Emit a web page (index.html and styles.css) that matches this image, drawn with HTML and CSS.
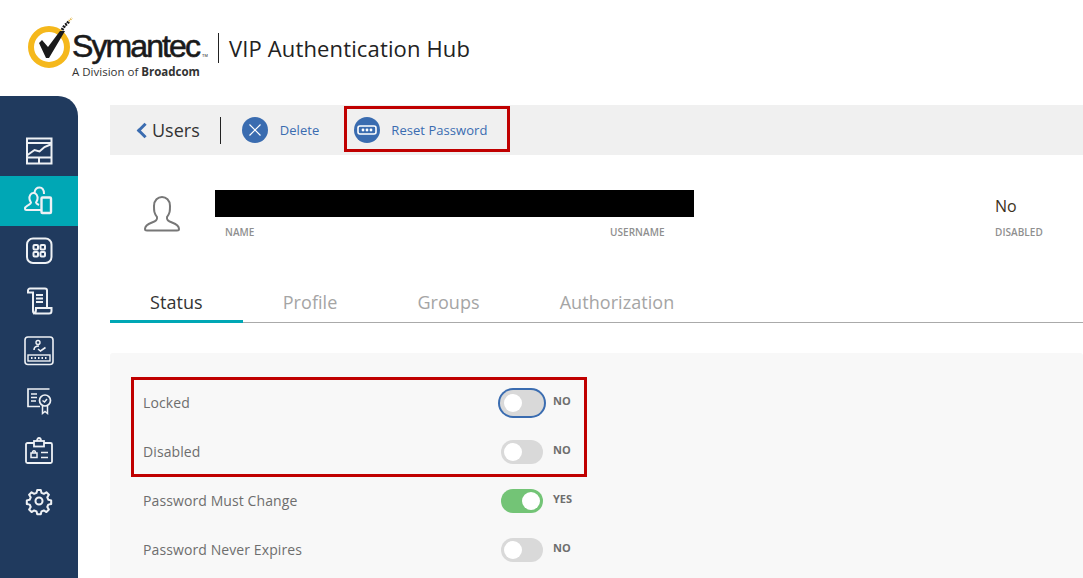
FILE: index.html
```html
<!DOCTYPE html>
<html lang="en">
<head>
    <meta charset="UTF-8">
    <meta name="viewport" content="width=device-width, initial-scale=1.0">
    <title>VIP Authentication Hub</title>
    <link rel="stylesheet" href="styles.css">
</head>
<body>
    <header class="header">
        <svg class="logo-mark" width="50" height="54" viewBox="0 0 50 54">
            <circle cx="21" cy="31" r="18" fill="none" stroke="#f5b81c" stroke-width="6"/>
            <path d="M11 27 L14 24 L20 31 L32 15 L37 15 L21 42 L18 42 Z" fill="#1a1a1a"/>
            <path d="M34 14 L37 9 L39 8 L41 5" fill="none" stroke="#1a1a1a" stroke-width="3" stroke-dasharray="2 1"/>
            <path d="M41 5 L44 2" fill="none" stroke="#d9a520" stroke-width="2" stroke-dasharray="1 1"/>
        </svg>
        <div class="logo-text">
            <div class="logo-name">Symantec<span class="logo-tm">TM</span></div>
            <div class="logo-sub">A Division of <b>Broadcom</b></div>
        </div>
        <div class="header-title">VIP Authentication Hub</div>
    </header>

    <div class="app">
        <nav class="sidebar">
            <a class="nav-item">
                <svg viewBox="0 0 30 30"><path d="M3 2.500h24.500v25H3z M3 7h24.500 M3 21.500h24.500 M15 21.500v6 M3.500 19l7-5 5 1.500 5-4.500 6-2.500"/></svg>
            </a>
            <a class="nav-item active">
                <svg viewBox="0 0 30 30"><path d="M10.500 6.500C11 3.500 13 1.500 15.500 1.500c3 0 4.500 2.500 4.500 6.500 M9.500 7a4 5 0 0 0-4 6c.2 1.500 1 2.500 1.500 3.500 0 1-1 1.500-2.500 2.500C3 20 1 21 1 22.500c0 1 .5 1.500 1.500 1.500H17 M9.500 7a4 5 0 0 1 4 6c-.2 1.500-1 2.500-1.500 3.500 0 1 1 1.500 3 2.500"/><rect x="17.500" y="11.500" width="9.500" height="15.500" rx="1" stroke-width="2.400"/></svg>
            </a>
            <a class="nav-item">
                <svg viewBox="0 0 30 30"><rect x="3" y="2.500" width="24.500" height="24.500" rx="6"/><rect x="9.500" y="9" width="4.500" height="4.500" rx="1"/><rect x="16.500" y="9" width="4.500" height="4.500" rx="1"/><rect x="9.500" y="16" width="4.500" height="4.500" rx="1"/><rect x="16.500" y="16" width="4.500" height="4.500" rx="1"/></svg>
            </a>
            <a class="nav-item">
                <svg viewBox="0 0 30 30"><path d="M6 2.500h15a2 2 0 0 1 2 2V22h4.500v3a2.500 2.500 0 0 1-2.500 2.500H11a2.500 2.500 0 0 1-2-2.500V6.500H4V4.500a2 2 0 0 1 2-2z M9 27.500c3 0 3-2.500 3-5.500h11.500 M12 9h7 M12 12.500h7 M12 16h7"/></svg>
            </a>
            <a class="nav-item">
                <svg viewBox="0 0 30 30"><rect x="1" y="1" width="28" height="27.500" rx="3" stroke-width="1.600"/><circle cx="14" cy="6.500" r="2" stroke-width="1.400"/><path d="M10 14c0-3 2-4 5-4 M14 13l2.500 2 5-3.500" stroke-width="1.600"/><rect x="4" y="19" width="22" height="6" stroke-width="1.400"/><path d="M7 22h16" stroke-width="2" stroke-dasharray="1.500 2"/></svg>
            </a>
            <a class="nav-item">
                <svg viewBox="0 0 30 30"><path d="M25.500 3H4v17.500h12 M7 8h6 M7 11.500h6 M7 15h5" stroke-width="1.700"/><circle cx="21" cy="14.500" r="5.500" stroke-width="1.700"/><path d="M18.500 14.500l2 1.500 2.500-3 M18.500 20v7.500l2.500-2 2.500 2V20" stroke-width="1.500"/></svg>
            </a>
            <a class="nav-item">
                <svg viewBox="0 0 30 30"><rect x="2" y="7" width="26" height="20" rx="1.500" stroke-width="1.800"/><rect x="10" y="5" width="10" height="5.500" fill="#203a5e" stroke-width="1.800"/><path d="M13 5c0-4 4-4 4 0" stroke-width="1.800"/><rect x="7" y="17" width="6" height="4.500" stroke-width="1.500"/><path d="M8.500 17c0-3 3-3 3 0 M17 16.500h7 M17 21.500h7" stroke-width="1.600"/></svg>
            </a>
            <a class="nav-item">
                <svg viewBox="-2 -2 34 34"><path d="M13 2.500h4l.8 3.300 2.700 1.100 2.900-1.800 2.800 2.800-1.800 2.900 1.100 2.700 3.300.8v4l-3.300.8-1.100 2.700 1.800 2.900-2.800 2.800-2.900-1.800-2.700 1.100-.8 3.300h-4l-.8-3.300-2.700-1.100-2.900 1.800-2.800-2.800 1.800-2.900-1.100-2.700-3.300-.8v-4l3.300-.8 1.100-2.700-1.800-2.900 2.800-2.800 2.900 1.800 2.700-1.100z" stroke-width="2.300" stroke-linejoin="round"/><circle cx="15" cy="15" r="4" stroke-width="2.300"/></svg>
            </a>
        </nav>

        <main class="main">
            <div class="toolbar">
                <a class="back-link"><span class="back-chevron"></span>Users</a>
                <span class="toolbar-divider"></span>
                <a class="tool-btn tool-delete">
                    <span class="tool-icon">
                        <svg width="14" height="14" viewBox="0 0 14 14"><path d="M1.500 1.500l11 11M12.500 1.500l-11 11" stroke="#fff" stroke-width="1.200"/></svg>
                    </span>
                    Delete
                </a>
                <a class="tool-btn tool-reset">
                    <span class="tool-icon">
                        <svg width="20" height="10" viewBox="0 0 20 10"><rect x="1" y="1" width="18" height="8" rx="2" fill="none" stroke="#fff" stroke-width="1.600"/><circle cx="6" cy="5" r="1.400" fill="#fff"/><circle cx="10" cy="5" r="1.400" fill="#fff"/><circle cx="14" cy="5" r="1.400" fill="#fff"/></svg>
                    </span>
                    Reset Password
                </a>
            </div>

            <section class="profile">
                <svg class="avatar" width="40" height="40" viewBox="0 0 40 40"><path d="M15 23c-3-4-3-6-3-11 0-6 4-9 8-9s8 3 8 9c0 5 0 7-3 11-.5 3 1 4 5 5.500 4 1.500 7 3 7 6.500 0 1.500-1 1.500-2 1.500H5c-1 0-2 0-2-1.500 0-3.500 3-5 7-6.500 4-1.500 5.500-2.500 5-5.500z" fill="none" stroke="#777" stroke-width="2"/></svg>
                <div class="profile-main">
                    <div class="redacted"></div>
                    <div class="profile-labels">
                        <span class="field-label">NAME</span>
                        <span class="field-label">USERNAME</span>
                    </div>
                </div>
                <div class="profile-disabled">
                    <div class="field-value">No</div>
                    <div class="field-label">DISABLED</div>
                </div>
            </section>

            <div class="tabs">
                <a class="tab active">Status</a>
                <a class="tab">Profile</a>
                <a class="tab">Groups</a>
                <a class="tab">Authorization</a>
            </div>

            <section class="status-panel">
                <div class="status-group">
                    <div class="status-row">
                        <span class="status-label">Locked</span>
                        <span class="toggle focused"><span class="knob"></span></span>
                        <span class="status-value">NO</span>
                    </div>
                    <div class="status-row">
                        <span class="status-label">Disabled</span>
                        <span class="toggle"><span class="knob"></span></span>
                        <span class="status-value">NO</span>
                    </div>
                </div>
                <div class="status-row">
                    <span class="status-label">Password Must Change</span>
                    <span class="toggle on"><span class="knob"></span></span>
                    <span class="status-value">YES</span>
                </div>
                <div class="status-row">
                    <span class="status-label">Password Never Expires</span>
                    <span class="toggle"><span class="knob"></span></span>
                    <span class="status-value">NO</span>
                </div>
            </section>
        </main>
    </div>
</body>
</html>
```

FILE: styles.css
```css
html, body {
    height: 100%;
}
body {
    margin: 0;
    overflow: hidden;
    background-color: #fff;
    font-family: 'Open Sans', 'Noto Sans', sans-serif;
    color: #333;
    display: flex;
    flex-direction: column;
}
.header {
    height: 96px;
    flex: none;
    display: flex;
    align-items: flex-start;
    padding-left: 28px;
}
.logo-mark {
    margin-top: 16px;
    margin-right: -6px;
    flex: none;
}
.logo-text {
    width: 141px;
    margin-top: 27px;
    font-family: 'Liberation Sans', Arial, sans-serif;
    color: #1a1a1a;
}
.logo-name {
    font-size: 32px;
    line-height: 38px;
    letter-spacing: -1.9px;
    -webkit-text-stroke: 0.6px #1a1a1a;
    white-space: nowrap;
}
.logo-tm {
    font-size: 4px;
    letter-spacing: 0;
    -webkit-text-stroke: 0;
    margin-left: 3px;
}
.logo-sub {
    margin-top: -10px;
    font-family: 'Open Sans', sans-serif;
    font-size: 11.5px;
    line-height: 14px;
    color: #333;
    white-space: nowrap;
}
.header-title {
    margin-top: 33px;
    margin-left: 5px;
    height: 30px;
    padding-left: 10px;
    border-left: 1px solid #222;
    font-size: 22px;
    line-height: 31px;
    letter-spacing: 0.14px;
    color: #222;
    white-space: nowrap;
}
.app {
    flex: 1;
    display: flex;
    min-height: 0;
}
.sidebar {
    width: 78px;
    flex: none;
    padding-top: 30px;
    box-sizing: border-box;
    background-color: #203a5e;
    border-top-right-radius: 20px;
}
.nav-item {
    height: 50px;
    display: flex;
    align-items: center;
    justify-content: center;
}
.nav-item.active {
    background-color: #00a7b5;
}
.nav-item svg {
    width: 30px;
    height: 30px;
    fill: none;
    stroke: #eef1f5;
    stroke-width: 2;
}
.main {
    flex: 1;
    min-width: 0;
    padding: 9px 0 0 32px;
}
.toolbar {
    height: 50px;
    display: flex;
    align-items: center;
    background-color: #f0f0f0;
}
.back-link {
    display: flex;
    align-items: center;
    margin-left: 27px;
    font-size: 18px;
    color: #333;
}
.back-chevron {
    box-sizing: border-box;
    width: 11px;
    height: 11px;
    margin: 0 2px 0 2px;
    border-left: 3px solid #3a6cb0;
    border-bottom: 3px solid #3a6cb0;
    transform: rotate(45deg);
}
.toolbar-divider {
    width: 1px;
    height: 27px;
    margin-left: 20px;
    background-color: #222;
}
.tool-btn {
    display: flex;
    align-items: center;
    font-size: 13px;
    letter-spacing: 0.05px;
    color: #3a6cb0;
}
.tool-delete {
    margin-left: 21px;
}
.tool-reset {
    box-sizing: border-box;
    width: 166px;
    height: 46px;
    margin-left: 25px;
    margin-top: -2px;
    padding-top: 2px;
    padding-left: 7px;
    border: 3px solid #c00000;
}
.tool-icon {
    width: 26px;
    height: 26px;
    margin-right: 12px;
    border-radius: 50%;
    background-color: #3a6cb0;
    display: flex;
    align-items: center;
    justify-content: center;
}
.tool-reset .tool-icon {
    margin-right: 11px;
}
.profile {
    height: 135px;
    display: flex;
    align-items: flex-start;
    box-sizing: border-box;
    padding: 35px 0 0 32px;
}
.avatar {
    margin-top: 4px;
    margin-right: 33px;
    flex: none;
}
.profile-main {
    width: 479px;
}
.redacted {
    height: 27px;
    background-color: #000;
}
.profile-labels {
    display: flex;
    padding-left: 10px;
    margin-top: 9px;
}
.profile-labels .field-label:first-child {
    width: 385px;
}
.field-label {
    font-size: 10px;
    line-height: 12px;
    letter-spacing: 0.05px;
    font-weight: 600;
    color: #8f8f8f;
}
.profile-disabled {
    margin-left: 301px;
}
.field-value {
    font-size: 16px;
    line-height: 32px;
    margin-bottom: 4px;
    color: #3c3020;
}
.tabs {
    height: 33px;
    display: flex;
    box-sizing: border-box;
    border-bottom: 1px solid #aaa;
}
.tab {
    padding: 0 40px;
    font-size: 18px;
    line-height: 24px;
    letter-spacing: 0.06px;
    color: #a5a5a5;
}
.tab.active {
    height: 33px;
    box-sizing: border-box;
    border-bottom: 3px solid #00a7b5;
    color: #333;
}
.status-panel {
    height: 240px;
    margin-top: 30px;
    padding-top: 25px;
    box-sizing: border-box;
    background-color: #f8f8f8;
    border-radius: 3px;
}
.status-group {
    width: 454px;
    margin-left: 22px;
    outline: 3px solid #c00000;
    outline-offset: -2px;
}
.status-group .status-row {
    margin-left: 0;
}
.status-row {
    height: 49px;
    margin-left: 22px;
    padding-left: 11px;
    display: flex;
    align-items: center;
}
.status-label {
    width: 358px;
    font-size: 14px;
    letter-spacing: 0.1px;
    color: #6e6e6e;
}
.toggle {
    width: 42px;
    height: 24px;
    box-sizing: border-box;
    padding: 3px;
    border-radius: 12px;
    background-color: #d9d9d9;
    display: flex;
}
.toggle.on {
    background-color: #73c476;
    justify-content: flex-end;
}
.toggle.focused {
    box-shadow: 0 0 0 1px #d9d9d9, 0 0 0 3px #3a6cb0;
}
.knob {
    width: 18px;
    height: 18px;
    border-radius: 50%;
    background-color: #fff;
}
.status-value {
    margin-left: 10px;
    margin-top: -5px;
    font-size: 11px;
    font-weight: 700;
    color: #6e6e6e;
}
```
